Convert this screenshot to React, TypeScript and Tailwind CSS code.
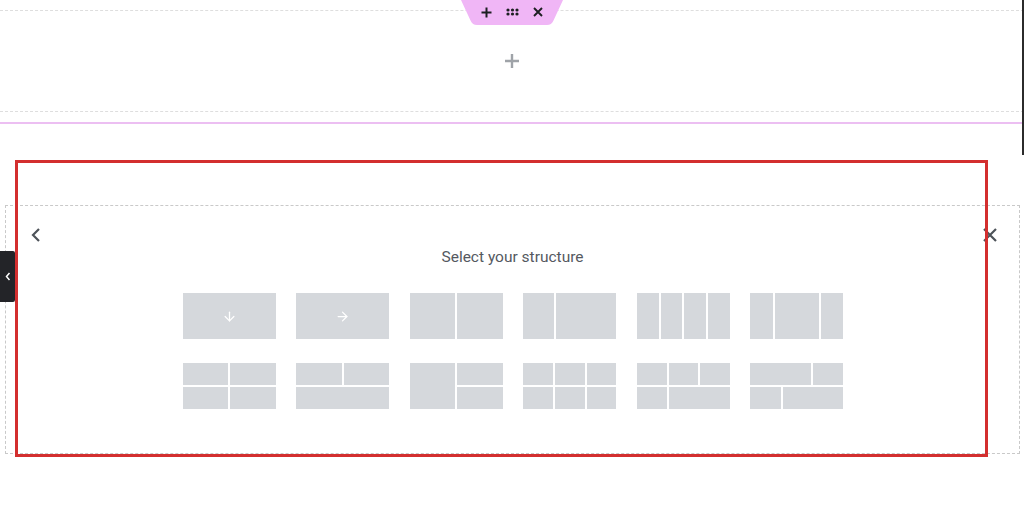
import { ArrowDown, ArrowRight } from "lucide-react";

type Layout = string[][];

const structures: { arrow?: "down" | "right"; split?: boolean; rows?: Layout }[] = [
  { arrow: "down" },
  { arrow: "right" },
  { rows: [["flex-1", "flex-1"]] },
  { rows: [["flex-1", "flex-[2]"]] },
  { rows: [["flex-1", "flex-1", "flex-1", "flex-1"]] },
  { rows: [["flex-1", "flex-[2]", "flex-1"]] },
  { rows: [["flex-1", "flex-1"], ["flex-1", "flex-1"]] },
  { rows: [["flex-1", "flex-1"], ["flex-1"]] },
  { split: true },
  { rows: [["flex-1", "flex-1", "flex-1"], ["flex-1", "flex-1", "flex-1"]] },
  { rows: [["flex-1", "flex-1", "flex-1"], ["flex-1", "flex-[2]"]] },
  { rows: [["flex-[2]", "flex-1"], ["flex-1", "flex-[2]"]] },
];

function Structure({ s }: { s: (typeof structures)[number] }) {
  if (s.arrow) {
    return (
      <button className="flex h-[46px] w-[93px] items-center justify-center bg-[#d5d8dc]">
        {s.arrow === "down" ? (
          <ArrowDown size={15} strokeWidth={2} className="text-white" />
        ) : (
          <ArrowRight size={15} strokeWidth={2} className="text-white" />
        )}
      </button>
    );
  }
  if (s.split) {
    return (
      <button className="flex h-[46px] w-[93px] gap-[2px] bg-white">
        <div className="flex-1 bg-[#d5d8dc]" />
        <div className="flex flex-1 flex-col gap-[2px]">
          <div className="flex-1 bg-[#d5d8dc]" />
          <div className="flex-1 bg-[#d5d8dc]" />
        </div>
      </button>
    );
  }
  return (
    <button className="flex h-[46px] w-[93px] flex-col gap-[2px] bg-white">
      {s.rows!.map((row, i) => (
        <div key={i} className="flex flex-1 gap-[2px]">
          {row.map((cls, j) => (
            <div key={j} className={`${cls} bg-[#d5d8dc]`} />
          ))}
        </div>
      ))}
    </button>
  );
}

export default function App() {
  return (
    <div className="relative h-[522px] w-full overflow-hidden bg-white font-['Roboto','Liberation_Sans',sans-serif]">
      {/* Empty section */}
      <div className="pt-[10px]">
        <div className="flex h-[102px] items-center justify-center border-y border-dashed border-[#dedede]">
          <svg width="16" height="16" viewBox="0 0 16 16" className="text-[#9fa3a8]">
            <path d="M8 1v14M1 8h14" stroke="currentColor" strokeWidth="2.4" fill="none" />
          </svg>
        </div>
      </div>
      <div className="mt-[10px] border-t-2 border-[#ecbff2]" />

      {/* Structure picker */}
      <div className="ml-[5px] mr-[4px] mt-[81px] border border-dashed border-[#c9c9c9] pb-[44px] pt-[21px]">
        <div className="flex h-4 items-center justify-between pl-[25px] pr-[21px]">
          <svg width="10" height="16" viewBox="0 0 10 16" className="text-[#4d5359]">
            <path d="M8 2 2 8l6 6" stroke="currentColor" strokeWidth="2.2" fill="none" />
          </svg>
          <svg width="16" height="16" viewBox="0 0 16 16" className="text-[#4d5359]">
            <path d="M2 2l12 12M14 2 2 14" stroke="currentColor" strokeWidth="2.2" fill="none" />
          </svg>
        </div>
        <p className="mt-1 text-center text-[15.5px] leading-5 text-[#55595f]">
          Select your structure
        </p>
        <div className="mt-[26px] grid grid-cols-[repeat(6,93px)] justify-center gap-x-[20.6px] gap-y-[24px] pl-[1px]">
          {structures.map((s, i) => (
            <Structure key={i} s={s} />
          ))}
        </div>
      </div>

      {/* Section handle */}
      <div className="absolute left-1/2 top-0 h-[25px] w-[102px] -translate-x-1/2">
        <svg width="102" height="25" viewBox="0 0 102 25" className="absolute inset-0">
          <path d="M0 0H102L92.5 20.5Q90.5 25 86 25H16Q11.5 25 9.5 20.5Z" fill="#f0b6f6" />
        </svg>
        <div className="relative flex h-[24px] items-center justify-center gap-[14px] text-[#1d1f22]">
          <svg width="11" height="11" viewBox="0 0 11 11">
            <path d="M5.5 0.5v10M0.5 5.5h10" stroke="currentColor" strokeWidth="2" fill="none" />
          </svg>
          <svg width="13" height="8" viewBox="0 0 13 8">
            {[2, 6.5, 11].map((x) =>
              [2, 6].map((y) => <circle key={`${x}-${y}`} cx={x} cy={y} r="1.6" fill="currentColor" />)
            )}
          </svg>
          <svg width="10" height="10" viewBox="0 0 10 10">
            <path d="M1 1l8 8M9 1 1 9" stroke="currentColor" strokeWidth="1.9" fill="none" />
          </svg>
        </div>
      </div>

      {/* Panel toggle */}
      <div className="absolute left-0 top-[251px] flex h-[51px] w-[15px] items-center justify-center rounded-r-[2px] bg-[#232428]">
        <svg width="6" height="9" viewBox="0 0 6 9" className="text-white">
          <path d="M4.5 1 1.5 4.5 4.5 8" stroke="currentColor" strokeWidth="1.5" fill="none" />
        </svg>
      </div>

      {/* Edge strip */}
      <div className="absolute right-0 top-0 h-[155px] w-[2px] bg-[#2b2b2b]" />

      {/* Annotation */}
      <div className="pointer-events-none absolute left-[15px] top-[160px] h-[297px] w-[973px] border-[3px] border-[#d32f2f]" />
    </div>
  );
}
